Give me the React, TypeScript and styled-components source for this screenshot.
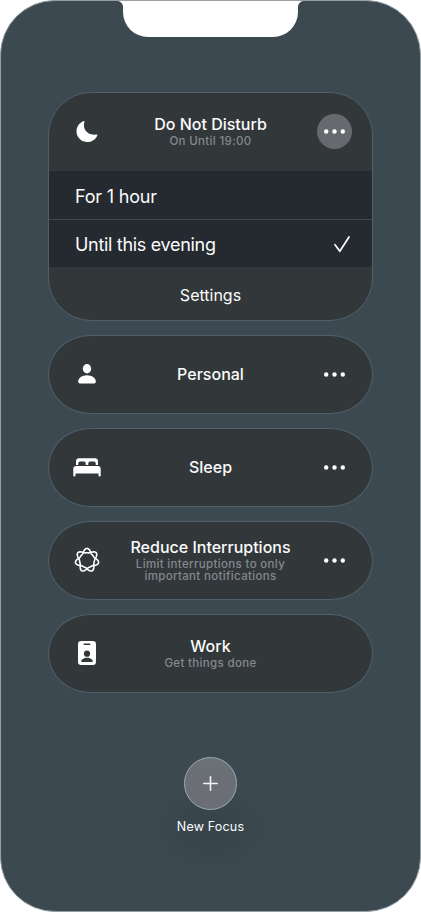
import React from "react";
import styled, { createGlobalStyle, css } from "styled-components";

const Global = createGlobalStyle`
  *, *::before, *::after { box-sizing: border-box; }
  html, body { margin: 0; background: #fff; }
  body { font-family: Inter, "Liberation Sans", sans-serif; color: #fbfbfc; }
  button { font: inherit; color: inherit; background: none; border: 0; padding: 0; }
`;

const Screen = styled.main`
  position: relative;
  width: 421px;
  height: 912px;
  overflow: hidden;
  padding: 91px 47px 0;
  border: 1px solid #98a0a5;
  border-radius: 55px;
  background: #3d4951;
  display: flex;
  flex-direction: column;
  align-items: center;
`;

const Notch = styled.div`
  position: absolute;
  top: -1px;
  left: 122px;
  width: 175px;
  height: 37px;
  background: #fff;
  border-radius: 0 0 25px 25px;

  &::before,
  &::after {
    content: "";
    position: absolute;
    top: 0;
    width: 6px;
    height: 7px;
  }
  &::before {
    right: 100%;
    background: radial-gradient(circle at 0 100%, transparent 5.6px, #fff 6.4px);
  }
  &::after {
    left: 100%;
    background: radial-gradient(circle at 100% 100%, transparent 5.6px, #fff 6.4px);
  }
`;

const FocusList = styled.div`
  width: 325px;
  display: flex;
  flex-direction: column;
  gap: 14px;
`;

const Card = styled.section<{ $expanded?: boolean }>`
  overflow: hidden;
  border: 1px solid #50606a;
  background: #32373a;
  height: ${(p) => (p.$expanded ? "229px" : "79px")};
  border-radius: ${(p) => (p.$expanded ? "43px" : "42px / 39.5px")};
`;

const Header = styled.div`
  height: 78px;
  padding: 0 20px 2px 17px;
  display: grid;
  grid-template-columns: 40px 1fr 35px;
  align-items: center;
`;

const IconSlot = styled.div`
  display: grid;
  place-items: center;
  padding-left: 1px;
  svg { display: block; }
`;

const Labels = styled.div`
  text-align: center;
  padding-right: 2px;
`;

const Title = styled.h2`
  margin: 0;
  font-size: 16px;
  line-height: 18px;
  font-weight: 500;
  white-space: nowrap;
`;

const Subtitle = styled.p`
  margin: 0;
  padding-top: 2px;
  font-size: 11.5px;
  line-height: 12px;
  font-weight: 500;
  letter-spacing: 0.34px;
  color: #84898c;
  white-space: pre-line;
`;

const MoreButton = styled.button<{ $filled?: boolean }>`
  width: 35px;
  height: 35px;
  border-radius: 50%;
  display: grid;
  place-items: center;
  ${(p) => p.$filled && css`background: #66696d;`}
`;

const Options = styled.div`
  background: #252930;
`;

const Option = styled.button<{ $spacing: string }>`
  width: 100%;
  height: 48px;
  padding: 2px 22px 0 26px;
  display: flex;
  align-items: center;
  justify-content: space-between;
  font-size: 18px;
  letter-spacing: ${(p) => p.$spacing};
  & + & {
    padding-top: 1px;
    border-top: 1px solid #414649;
  }
`;

const Settings = styled.button`
  width: 100%;
  height: 54px;
  padding-top: 2px;
  font-size: 16px;
`;

const AddFocus = styled.div`
  width: 128px;
  height: 122px;
  margin-top: 64px;
  display: flex;
  flex-direction: column;
  align-items: center;
  background: radial-gradient(ellipse 64px 50px at 50% 71px, #38444c 20%, #3d495100 100%);
`;

const AddButton = styled.button`
  width: 53px;
  height: 53px;
  flex: none;
  border: 1px solid #9baab2;
  border-radius: 50%;
  background: linear-gradient(#6b7175, #6c6d76);
  display: grid;
  place-items: center;
`;

const AddLabel = styled.span`
  margin-top: 9px;
  font-size: 12.5px;
  line-height: 16px;
  letter-spacing: 0.18px;
  white-space: nowrap;
`;

const MoonIcon = () => (
  <svg width="22" height="22" viewBox="-0.2 -0.5 22.5 22.5" fill="#fff">
    <path d="M7.600.5C8.200.200 8.700.700 8.400 1.400C6.200 8.200 11 15.800 20.300 14.300C21.400 14.100 22 14.500 21.500 15.500C19.800 19.300 16 22 11.400 22C5.200 22 .3 17.100.3 11C.3 6.300 3.200 2.200 7.600.5Z" />
  </svg>
);

const PersonIcon = () => (
  <svg width="18" height="20" viewBox="0 0 18 20" fill="#fff">
    <ellipse cx="9" cy="4.800" rx="4.200" ry="4.700" />
    <path d="M9 11.200C13.800 11.200 17.800 14.100 17.800 17.400C17.800 18.800 17 19.500 15.400 19.500H2.600C1 19.500.2 18.800.2 17.400C.2 14.100 4.200 11.200 9 11.200Z" />
  </svg>
);

const BedIcon = () => (
  <svg width="28" height="19" viewBox="0 0 28 19" fill="#fff">
    <path d="M3 7V3.200Q3 .3 6 .3H22Q25 .3 25 3.200V7H22.700V5.300Q22.700 3.500 21 3.500H17Q15.300 3.500 15.300 5.300V7H12.700V5.300Q12.700 3.500 11 3.500H7Q5.300 3.500 5.300 5.300V7Z" />
    <path d="M3.200 8H24.800Q27.700 8 27.700 10.900V17.500Q27.700 18.600 26.600 18.600Q25.500 18.600 25.500 17.500V15.500H2.500V17.500Q2.500 18.600 1.400 18.600Q.3 18.600.3 17.500V10.900Q.3 8 3.200 8Z" />
  </svg>
);

/* A rounded seven-pointed weave that closes after two turns. */
const rosette = Array.from({ length: 281 }, (_, i) => {
  const t = (i / 280) * Math.PI * 4;
  const r = 9.1 + 2.2 * Math.cos(3.5 * t) + 0.5 * Math.cos(7 * t);
  return `${i ? "L" : "M"}${(13 + r * Math.sin(t)).toFixed(2)} ${(13.2 - r * Math.cos(t)).toFixed(2)}`;
}).join("");

const RosetteIcon = () => (
  <svg width="26" height="26" viewBox="0 0 26 26" fill="none" stroke="#fff" strokeWidth="1.6">
    <path d={rosette} />
  </svg>
);

const BadgeIcon = () => (
  <svg width="18" height="24" viewBox="0 0 18 24">
    <rect width="18" height="24" rx="3.2" fill="#fff" />
    <rect x="5.5" y="2.4" width="7" height="1.6" rx=".8" fill="#32373a" />
    <circle cx="9" cy="12.7" r="3.1" fill="#32373a" />
    <path d="M9 16.700C12.400 16.700 14.800 18.600 14.800 20.200Q14.800 21 14 21H4Q3.200 21 3.200 20.200C3.200 18.600 5.600 16.700 9 16.700Z" fill="#32373a" />
  </svg>
);

const CheckIcon = () => (
  <svg width="16" height="17" viewBox="0 0 16 17" fill="none" stroke="#fff" strokeWidth="1.7" strokeLinecap="round" strokeLinejoin="round">
    <path d="M1 8.700L5.800 15.300L15 1" />
  </svg>
);

const PlusIcon = () => (
  <svg width="15" height="15" viewBox="0 0 15 15" stroke="#f4f4f5" strokeWidth="1.6" strokeLinecap="round">
    <path d="M7.5 .8V14.200M.8 7.500H14.200" />
  </svg>
);

const DotsIcon = () => (
  <svg width="21" height="5" viewBox="0 0 21 5" fill="#fff">
    <circle cx="2.2" cy="2.5" r="2.2" />
    <circle cx="10.5" cy="2.5" r="2.2" />
    <circle cx="18.8" cy="2.5" r="2.2" />
  </svg>
);

type FocusProps = {
  icon: React.ReactNode;
  title: string;
  subtitle?: string;
  more?: boolean;
  filled?: boolean;
  children?: React.ReactNode;
};

const Focus = ({ icon, title, subtitle, more = true, filled, children }: FocusProps) => (
  <Card $expanded={!!children}>
    <Header>
      <IconSlot>{icon}</IconSlot>
      <Labels>
        <Title>{title}</Title>
        {subtitle && <Subtitle>{subtitle}</Subtitle>}
      </Labels>
      {more && (
        <MoreButton $filled={filled} aria-label="More">
          <DotsIcon />
        </MoreButton>
      )}
    </Header>
    {children}
  </Card>
);

export default function App() {
  return (
    <>
      <Global />
      <Screen>
        <Notch />
        <FocusList>
          <Focus icon={<MoonIcon />} title="Do Not Disturb" subtitle="On Until 19:00" filled>
            <Options>
              <Option $spacing="-0.2px">For 1 hour</Option>
              <Option $spacing="-0.31px">Until this evening<CheckIcon /></Option>
            </Options>
            <Settings>Settings</Settings>
          </Focus>
          <Focus icon={<PersonIcon />} title="Personal" />
          <Focus icon={<BedIcon />} title="Sleep" />
          <Focus icon={<RosetteIcon />} title="Reduce Interruptions" subtitle={"Limit interruptions to only\nimportant notifications"} />
          <Focus icon={<BadgeIcon />} title="Work" subtitle="Get things done" more={false} />
        </FocusList>
        <AddFocus>
          <AddButton aria-label="Add focus"><PlusIcon /></AddButton>
          <AddLabel>New Focus</AddLabel>
        </AddFocus>
      </Screen>
    </>
  );
}
